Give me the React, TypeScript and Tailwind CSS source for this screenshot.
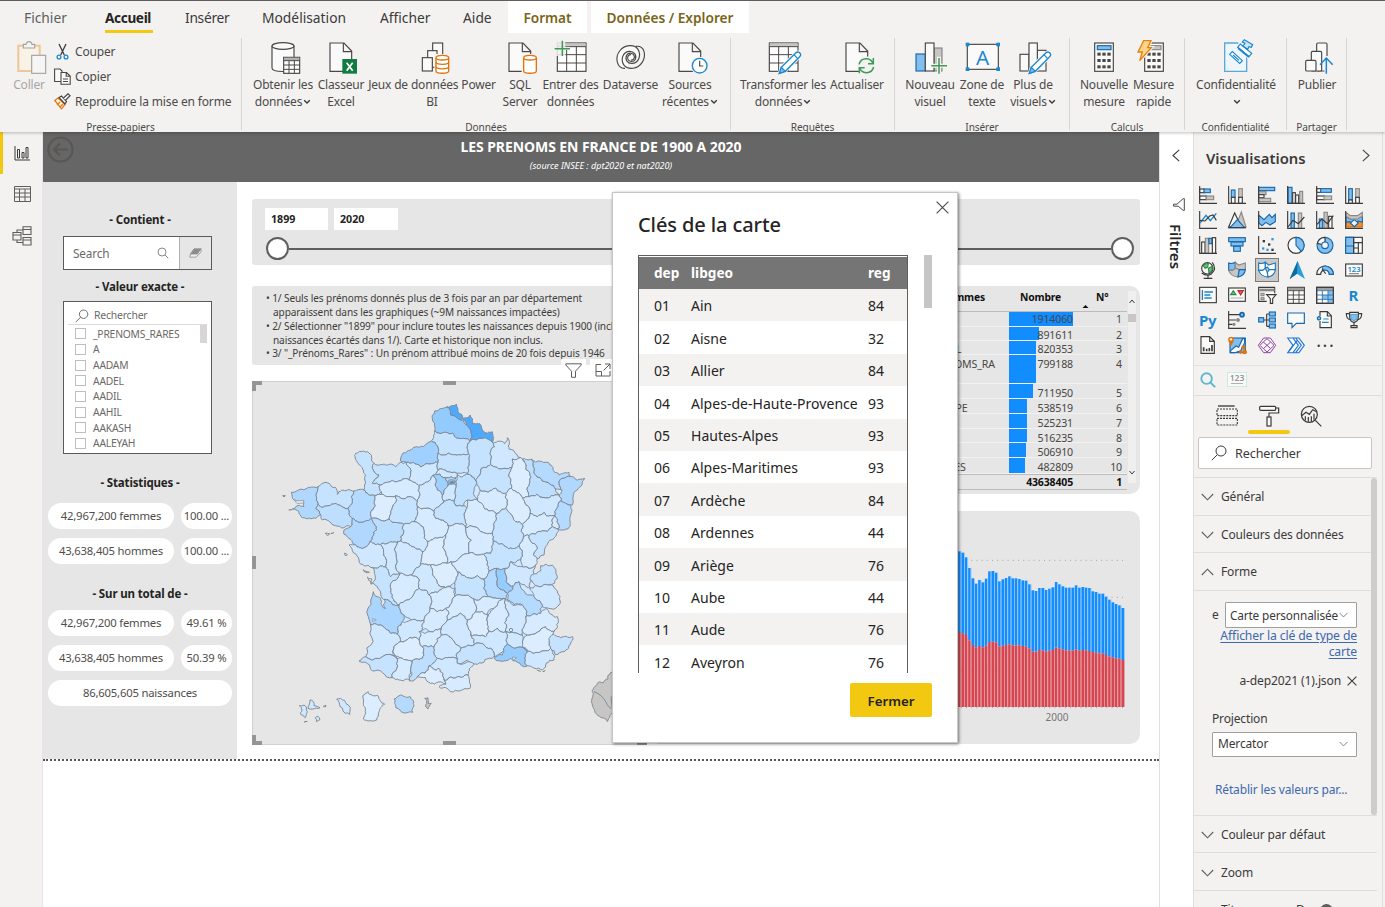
import React from "react";

type Kids = { children?: React.ReactNode };

const DARK = "#4a4846";
const BLUE = "#1b87cf";
const LIGHT = "#83beec";

/* ---------- ribbon icons (102 x 102 grid) ---------- */

const Big = ({ children, faded }: Kids & { faded?: boolean }) => (
  <svg viewBox="0 0 102 102" className={faded ? "h-[34px] w-[34px] shrink-0 overflow-visible opacity-45" : "h-[34px] w-[34px] shrink-0 overflow-visible"} fill="none" stroke={DARK} strokeWidth={3.5}>
    {children}
  </svg>
);

const Doc = () => <path d="M18 9H60L83 33V94H18ZM58 9V35H83" fill="#fafafa" />;

const Cyl = ({ x, y, w, h, color, rings = 0 }: { x: number; y: number; w: number; h: number; color: string; rings?: number }) => (
  <g stroke={color} strokeWidth={4}>
    <path d={`M${x} ${y + 7}V${y + h - 7}C${x} ${y + h + 2} ${x + w} ${y + h + 2} ${x + w} ${y + h - 7}V${y + 7}`} fill="#fff" />
    <ellipse cx={x + w / 2} cy={y + 7} rx={w / 2} ry={7} fill="#fff" />
    {Array.from({ length: rings }, (_, i) => {
      const yy = y + 7 + ((h - 14) * (i + 1)) / (rings + 1);
      return <path key={i} d={`M${x} ${yy}C${x} ${yy + 9} ${x + w} ${yy + 9} ${x + w} ${yy}`} />;
    })}
  </g>
);

const Grid = () => (
  <g>
    <rect x="10" y="9" width="86" height="85" fill="#fff" />
    <rect x="11" y="10" width="84" height="10" fill="#c8c6c4" stroke="none" />
    <path d="M10 20H96M10 44H96M10 69H96M38 20V94M67 20V94" strokeWidth="3" />
  </g>
);

const Pencil = () => (
  <g stroke={BLUE}>
    <path d="M40 100L46 82L90 38Q98 33 103 41Q106 47 100 51L58 94Z" fill="#fff" stroke="#f3f2f1" strokeWidth="9" />
    <path d="M40 100L46 82L90 38Q98 33 103 41Q106 47 100 51L58 94Z" fill="#fff" strokeWidth="4" />
    <path d="M40 100L46 82L58 94Z" fill={LIGHT} />
    <path d="M84 44L95 56" />
  </g>
);

const Keys = ({ x }: { x: number }) => (
  <g fill={DARK} stroke="none">
    {[38, 57, 76].map((y) => [0, 15, 30].map((dx) => <rect key={`${y}-${dx}`} x={x + dx} y={y} width="10" height="9" />))}
  </g>
);

const PasteIcon = () => (
  <Big faded>
    <rect x="19" y="17" width="64" height="76" stroke="#e8912d" fill="#fff3dd" strokeWidth="6" />
    <path d="M34 24V13H42Q44 5 51 5Q58 5 60 13H68V24Z" fill="#f3f2f1" />
    <rect x="59" y="46" width="42" height="54" fill="#fafafa" />
  </Big>
);
const GetDataIcon = () => (
  <Big>
    <path d="M18 18V84C18 98 84 98 84 84V18" fill="#fafafa" />
    <ellipse cx="51" cy="18" rx="33" ry="10" fill="#fafafa" />
    <rect x="53" y="52" width="48" height="48" fill="#fff" />
    <rect x="54" y="53" width="46" height="8" fill="#b3b0ad" stroke="none" />
    <path d="M53 62H101M53 75H101M53 88H101M69 62V100M85 62V100" strokeWidth="3" />
  </Big>
);
const ExcelIcon = () => (
  <Big>
    <Doc />
    <rect x="55" y="57" width="44" height="44" fill="#107c41" stroke="none" />
    <path d="M68 68L86 92M86 68L68 92" stroke="#fff" strokeWidth="5" />
  </Big>
);
const DatasetIcon = () => (
  <Big>
    <rect x="53" y="9" width="30" height="52" fill="#fafafa" />
    <rect x="38" y="32" width="28" height="50" fill="#fafafa" />
    <rect x="22" y="53" width="30" height="40" fill="#fafafa" />
    <rect x="58" y="42" width="48" height="62" fill="#f3f2f1" stroke="none" />
    <Cyl x={63} y={46} w={38} h={54} color="#e0740e" rings={2} />
  </Big>
);
const SqlIcon = () => (
  <Big>
    <Doc />
    <rect x="56" y="42" width="48" height="56" fill="#f3f2f1" stroke="none" />
    <Cyl x={62} y={46} w={38} h={54} color="#e0740e" />
  </Big>
);
const EnterIcon = () => (
  <Big>
    <Grid />
    <path d="M0 0H34V20H46V30H34V48H0Z" fill="#f3f2f1" stroke="none" opacity=".85" />
    <path d="M25 2V48M2 26H48" stroke="#3d9a57" strokeWidth="4.5" />
  </Big>
);
const DataverseIcon = () => (
  <Big>
    <path d="M33 85C8 86 2 52 17 33C32 13 62 12 72 28C83 47 73 68 56 70C40 72 32 58 38 46C44 36 58 38 61 49C62 56 57 61 51 60" fill="#fafafa" />
    <path d="M66 19C92 16 98 46 84 68C71 88 43 90 31 77C18 60 26 36 45 34C60 33 69 46 64 58C58 68 44 66 41 56C40 49 45 43 51 44" />
  </Big>
);
const RecentIcon = () => (
  <Big>
    <Doc />
    <circle cx="80" cy="77" r="27" fill="#f3f2f1" stroke="none" />
    <circle cx="80" cy="77" r="22" fill="#fff" stroke={BLUE} strokeWidth="4" />
    <path d="M80 62V78H91" />
  </Big>
);
const TransformIcon = () => (
  <Big>
    <Grid />
    <Pencil />
  </Big>
);
const RefreshIcon = () => (
  <Big>
    <Doc />
    <circle cx="79" cy="77" r="28" fill="#f3f2f1" stroke="none" />
    <g stroke="#3d9a57" strokeWidth="4.5">
      <path d="M57 73Q62 55 80 56Q94 57 99 70M100 54V71H84" />
      <path d="M101 81Q96 99 78 98Q64 97 59 84M58 100V83H74" />
    </g>
  </Big>
);
const VisualIcon = () => (
  <Big>
    <rect x="9" y="42" width="28" height="51" fill={LIGHT} stroke="#1668ad" />
    <rect x="63" y="24" width="24" height="69" fill="#c8c6c4" stroke="#8a8886" />
    <rect x="37" y="9" width="26" height="84" fill="#fafafa" />
    <path d="M78 50V104M52 77H104" stroke="#f3f2f1" strokeWidth="12" />
    <path d="M78 54V101M55 77H102" stroke="#3d9a57" strokeWidth="4.5" />
  </Big>
);
const TextBoxIcon = () => (
  <Big>
    <rect x="7" y="13" width="93" height="75" fill="#fafafa" />
    <g fill={BLUE} stroke="none">
      <rect x="2" y="8" width="11" height="11" />
      <rect x="94" y="8" width="11" height="11" />
      <rect x="2" y="82" width="11" height="11" />
      <rect x="94" y="82" width="11" height="11" />
    </g>
    <text x="53" y="74" textAnchor="middle" fontSize="62" fontFamily="Noto Sans, sans-serif" fill={BLUE} stroke="none">A</text>
  </Big>
);
const MoreVisualsIcon = () => (
  <Big>
    <rect x="12" y="43" width="27" height="50" fill="#fafafa" />
    <rect x="64" y="31" width="26" height="62" fill="#fafafa" />
    <rect x="39" y="9" width="25" height="84" fill="#fafafa" />
    <Pencil />
  </Big>
);
const MeasureIcon = () => (
  <Big>
    <rect x="23" y="9" width="56" height="85" fill="#fafafa" />
    <rect x="31" y="17" width="41" height="12" fill={LIGHT} stroke="#1668ad" />
    <Keys x={31} />
  </Big>
);
const QuickIcon = () => (
  <Big>
    <rect x="23" y="9" width="56" height="85" fill="#fafafa" />
    <rect x="31" y="17" width="41" height="12" fill="#c8c6c4" stroke="#8a8886" />
    <Keys x={31} />
    <path d="M20 2H42L32 23H43L8 62L16 36H3Z" fill="#fcd48a" stroke="#f3f2f1" strokeWidth="10" />
    <path d="M20 2H42L32 23H43L8 62L16 36H3Z" fill="#fcd48a" stroke="#e8810e" strokeWidth="4" />
  </Big>
);
const PrivacyIcon = () => (
  <Big>
    <path d="M58 9H17V94H83V50" fill="#eef6fc" stroke="#5aa7dc" strokeWidth="4" />
    <g stroke={BLUE} strokeWidth="3.6">
      <path d="M32 43L40 35L70 62L62 70Z" fill="#fff" />
      <path d="M42 45L60 61" />
      <path d="M62 24L94 50" stroke="#f3f2f1" strokeWidth="18" />
      <path d="M56 22L64 12L98 40L90 50Z" fill="#fff" />
      <path d="M58 25L90 51" strokeWidth="6" />
      <path d="M72 18L78 10L70 6L76 -1L101 14L97 22L90 20L86 28Z" fill="#cfe6f8" />
    </g>
  </Big>
);
const PublishIcon = () => (
  <Big>
    <rect x="50" y="9" width="31" height="84" rx="4" fill="#fafafa" />
    <rect x="34" y="34" width="31" height="59" rx="4" fill="#fafafa" />
    <rect x="17" y="61" width="31" height="32" rx="4" fill="#fafafa" />
    <path d="M79 48V102" stroke="#f3f2f1" strokeWidth="11" />
    <path d="M79 54V101M60 74L79 54L98 74" stroke={BLUE} strokeWidth="4.5" />
  </Big>
);

/* ---------- ribbon ---------- */

const Caret = () => (
  <svg viewBox="0 0 8 6" className="ml-[1px] inline-block h-[6px] w-[8px]" fill="none" stroke="#3b3a39" strokeWidth="1.4">
    <path d="M1.2 1.2L4 4L6.8 1.2" />
  </svg>
);

const Btn = ({ w, icon, a, b, caret, dim }: { w: string; icon: React.ReactNode; a: string; b?: string; caret?: boolean; dim?: boolean }) => (
  <div className={`${w} flex shrink-0 flex-col items-center`}>
    {icon}
    <div className={`mt-[3px] flex flex-col items-center whitespace-nowrap text-[12px] leading-[16.5px] tracking-[-0.18px] ${dim ? "text-[#a8a6a4]" : "text-[#4c4a48]"}`}>
      <span>{a}</span>
      <span>
        {b}
        {caret && <Caret />}
      </span>
    </div>
  </div>
);

const Group = ({ w, pl, label, children }: Kids & { w: string; pl: string; label: string }) => (
  <div className={`${w} flex h-[92px] shrink-0 flex-col border-r border-[#d8d6d4]`}>
    <div className={`${pl} flex h-[82px] shrink-0 pt-[2px]`}>{children}</div>
    <div className="text-center text-[10.1px] leading-[14px] tracking-[-0.1px] text-[#4c4a48]">{label}</div>
  </div>
);

const Small = ({ icon, children }: Kids & { icon: React.ReactNode }) => (
  <div className="flex h-[25px] items-center">
    <span className="flex w-[21px] items-center">{icon}</span>
    <span className="whitespace-nowrap text-[12px] tracking-[-0.16px] text-[#4c4a48]">{children}</span>
  </div>
);

const Ribbon = () => (
  <header className="relative z-10 h-[132px] shrink-0 border-t border-[#605e5c] bg-[#f3f2f1] shadow-[0_1px_3px_rgba(0,0,0,0.25)]">
    <nav className="flex h-[32px] items-stretch whitespace-nowrap text-[13.8px] leading-[33px] text-[#3b3a39]">
      <span className="ml-[24px] w-[81px] text-[#605e5c]">Fichier</span>
      <span className="relative mr-[32px] w-[48px] text-[13.6px] font-bold leading-[34px] tracking-[-0.35px] text-[#252423]">
        Accueil
        <i className="absolute bottom-0 left-0 h-[3px] w-[48px] bg-[#f2c811]" />
      </span>
      <span className="w-[77px] tracking-[-0.3px]">Insérer</span>
      <span className="w-[118px]">Modélisation</span>
      <span className="w-[83px]">Afficher</span>
      <span className="w-[45px]">Aide</span>
      <span className="mr-[4px] w-[79px] bg-white text-center text-[13.6px] font-semibold leading-[34px] text-[#7a6518]">Format</span>
      <span className="w-[158px] bg-white text-center text-[13.7px] font-semibold leading-[34px] text-[#7a6518]">Données / Explorer</span>
    </nav>
    <div className="flex pt-[5px]">
      <Group w="w-[242px]" pl="pl-[7px]" label="Presse-papiers">
        <Btn w="w-[44px]" icon={<PasteIcon />} a="Coller" dim />
        <div className="-mt-[1px] ml-[3px] flex flex-col">
          <Small
            icon={
              <svg viewBox="0 0 17 17" className="h-[17px] w-[17px]" fill="none" stroke="#3b3a39" strokeWidth="1.3">
                <path d="M5 1L10.3 12M12 1L6.7 12" />
                <circle cx="5" cy="14" r="1.9" stroke={BLUE} />
                <circle cx="12" cy="14" r="1.9" stroke={BLUE} />
              </svg>
            }
          >
            Couper
          </Small>
          <Small
            icon={
              <svg viewBox="0 0 17 17" className="h-[17px] w-[17px]" fill="#fafafa" stroke="#4a4846" strokeWidth="1.1">
                <path d="M.6 1H6L8 3V13.5H.6Z" />
                <path d="M7 4.5H12.5L16.2 8V16.3H7ZM12.2 4.5V8.3H16.2M9 11H14M9 13.5H14" />
              </svg>
            }
          >
            Copier
          </Small>
          <Small
            icon={
              <svg viewBox="0 0 17 17" className="h-[17px] w-[17px]" fill="#fafafa" stroke="#4a4846" strokeWidth="1.2">
                <path d="M.8 7.5L4 5L11 11.5L7.5 15.8Z" fill="#fff3dd" stroke="#e0740e" />
                <path d="M3 12L6 9M6 14L9 11" stroke="#e0740e" />
                <path d="M5 4.5L7.5 3L12.5 8.5L11 11Z" />
                <path d="M9.5 5L14 .8L16 2.8L11.5 7.2" />
              </svg>
            }
          >
            Reproduire la mise en forme
          </Small>
        </div>
      </Group>
      <Group w="w-[489px]" pl="pl-[9px]" label="Données">
        <Btn w="w-[64px]" icon={<GetDataIcon />} a="Obtenir les" b="données" caret />
        <Btn w="w-[52px]" icon={<ExcelIcon />} a="Classeur" b="Excel" />
        <Btn w="w-[130px]" icon={<DatasetIcon />} a="Jeux de données Power" b="BI" />
        <Btn w="w-[46px]" icon={<SqlIcon />} a="SQL" b="Server" />
        <Btn w="w-[55px]" icon={<EnterIcon />} a="Entrer des" b="données" />
        <Btn w="w-[65px]" icon={<DataverseIcon />} a="Dataverse" />
        <Btn w="w-[54px]" icon={<RecentIcon />} a="Sources" b="récentes" caret />
      </Group>
      <Group w="w-[164px]" pl="pl-[10px]" label="Requêtes">
        <Btn w="w-[84px]" icon={<TransformIcon />} a="Transformer les" b="données" caret />
        <Btn w="w-[64px]" icon={<RefreshIcon />} a="Actualiser" />
      </Group>
      <Group w="w-[175px]" pl="pl-[8px]" label="Insérer">
        <Btn w="w-[54px]" icon={<VisualIcon />} a="Nouveau" b="visuel" />
        <Btn w="w-[50px]" icon={<TextBoxIcon />} a="Zone de" b="texte" />
        <Btn w="w-[52px]" icon={<MoreVisualsIcon />} a="Plus de" b="visuels" caret />
      </Group>
      <Group w="w-[115px]" pl="pl-[8px]" label="Calculs">
        <Btn w="w-[52px]" icon={<MeasureIcon />} a="Nouvelle" b="mesure" />
        <Btn w="w-[47px]" icon={<QuickIcon />} a="Mesure" b="rapide" />
      </Group>
      <Group w="w-[102px]" pl="pl-[9px]" label="Confidentialité">
        <Btn w="w-[84px]" icon={<PrivacyIcon />} a="Confidentialité" caret />
      </Group>
      <Group w="w-[60px]" pl="pl-[4px]" label="Partager">
        <Btn w="w-[52px]" icon={<PublishIcon />} a="Publier" />
      </Group>
    </div>
  </header>
);

/* ---------- map ---------- */

const A = "#a9d5ff", B = "#b5daff", C = "#c5e3ff", D = "#cfe7ff", E = "#d6ebff", F = "#dbedff", H = "#97ccff", X = "#4faaff";

const REGIONS: [string, string][] = [
  ["#94cbff", "572,108 608,96 620,120 650,135 668,150 678,198 640,190 605,172 572,168"],
  [X, "608,96 638,88 642,110 655,130 650,135 620,120"],
  [X, "655,130 678,120 686,145 712,152 716,168 745,170 748,205 678,198 668,150"],
  [C, "572,168 605,172 640,190 678,198 674,236 640,240 612,234 582,235 580,212 562,198"],
  ["#9fd0ff", "562,198 580,212 582,235 582,262 550,266 530,276 508,262 487,262 470,258 475,236 510,216 545,208"],
  [C, "582,235 612,234 640,240 674,236 676,262 672,298 640,295 608,290 582,286 582,262"],
  [C, "678,198 748,205 752,215 740,262 740,268 712,280 708,300 696,318 680,300 672,298 676,262 674,236"],
  [D, "748,205 782,206 790,188 796,205 795,222 815,236 830,248 805,252 804,278 780,280 740,268 740,262 752,215"],
  [C, "740,268 780,280 804,278 800,320 802,340 785,355 755,340 732,352 708,345 698,325 696,318 708,300 712,280"],
  [F, "805,252 830,248 842,262 855,290 858,320 856,365 835,368 830,360 802,340 800,320 804,278"],
  ["#bddeff", "842,262 835,252 862,252 870,290 895,318 935,342 945,360 900,368 856,365 858,320 855,290"],
  [B, "862,252 875,262 885,258 912,262 930,290 945,300 975,292 980,305 955,310 945,325 955,348 935,342 895,318 870,290"],
  ["#b0d8ff", "980,305 1022,310 1000,345 985,390 965,385 950,378 945,360 955,348 945,325 955,310"],
  [B, "950,378 965,385 980,390 978,430 972,462 950,465 942,462 940,432 932,422 938,400"],
  [D, "835,368 856,365 900,368 945,360 950,378 938,400 932,422 900,412 880,425 858,415 850,392"],
  [F, "802,340 830,360 835,368 850,392 858,415 855,430 835,448 815,440 795,412 785,400 790,375 785,355"],
  [E, "708,345 732,352 755,340 785,355 790,375 785,400 760,415 735,408 715,388 700,372"],
  [E, "835,448 855,430 858,415 880,425 900,412 932,422 925,432 925,455 890,470 855,482 838,485 832,470"],
  [E, "925,432 932,422 940,432 942,462 925,455"],
  [C, "855,482 890,470 925,455 942,462 930,490 905,515 900,540 880,552 868,540 880,520 865,505"],
  [E, "838,485 855,482 865,505 880,520 868,540 880,552 875,570 860,580 835,578 830,555 835,530 825,512 835,495"],
  [C, "785,400 795,412 815,440 835,448 832,470 838,485 835,495 825,512 785,515 748,498 745,475 752,440 755,425 760,415"],
  [E, "670,375 700,372 715,388 735,408 760,415 755,425 752,440 745,475 710,470 665,458 660,420 668,400"],
  ["#bfe0ff", "640,300 672,298 680,300 696,318 698,325 690,360 700,372 670,375 660,392 635,392 630,378 632,355 636,330"],
  [D, "582,286 608,290 640,295 640,300 636,308 605,308 567,300"],
  ["#9fd0ff", "567,300 605,308 612,330 600,345 595,362 580,345"],
  [D, "612,330 636,330 632,355 630,378 600,378 595,362 600,345"],
  [B, "605,308 636,308 636,330 612,330"],
  [D, "487,262 508,262 530,276 550,266 582,262 582,286 567,300 555,318 525,332 510,322 494,315"],
  [C, "390,265 430,270 455,275 487,262 494,315 460,320 430,322 408,330 385,325 405,300 385,280"],
  [C, "335,235 380,238 382,255 390,265 385,280 405,300 385,325 408,330 412,350 392,362 360,345 358,285 340,262"],
  [E, "408,330 430,322 460,320 494,315 510,322 525,332 528,360 520,378 495,365 470,370 455,362 412,358 412,350"],
  [D, "525,332 555,318 567,300 580,345 595,362 600,378 585,395 570,408 545,400 520,395 520,378 528,360"],
  [F, "392,362 412,358 455,362 452,385 440,410 435,432 382,430 392,395"],
  [B, "330,348 360,345 392,362 392,395 382,430 340,440 325,430 312,400 325,380"],
  [C, "222,335 255,325 280,358 310,345 330,348 325,380 312,400 290,392 255,392 222,388"],
  ["#b0d8ff", "142,352 185,342 222,335 222,388 215,400 230,420 215,430 175,428 145,402 180,395 178,380 150,375"],
  ["#bddeff", "222,388 255,392 290,392 312,400 325,430 320,455 275,452 235,435 230,420 215,400"],
  ["#b0d8ff", "325,430 340,440 382,430 398,465 378,500 360,518 335,510 315,490 300,478 300,465 320,455"],
  ["#bbdeff", "382,430 435,432 480,448 470,498 462,500 440,500 410,508 378,500 398,465"],
  [C, "455,362 470,370 495,365 520,378 520,395 518,425 510,440 480,448 435,432 440,410 452,385"],
  [E, "520,395 545,400 570,408 575,430 612,452 605,480 570,490 550,500 540,488 530,450 510,440 518,425"],
  [C, "570,408 585,395 600,378 630,378 635,392 660,392 668,400 660,420 665,458 612,452 575,430"],
  [D, "480,448 510,440 530,450 540,488 550,500 535,530 500,512 470,498"],
  [D, "315,510 335,510 360,518 378,500 410,508 425,575 385,578 345,555"],
  [D, "410,508 440,500 462,500 468,595 440,605 425,575"],
  [D, "462,500 470,498 500,512 535,530 530,568 500,600 468,595"],
  [F, "550,500 570,490 605,480 600,500 608,565 560,570 530,568 535,530"],
  [E, "612,452 665,458 675,535 640,555 620,560 608,565 600,500 605,480"],
  [E, "665,458 710,470 745,475 748,498 740,535 718,538 700,540 675,535"],
  [C, "748,498 785,515 825,512 835,530 830,555 800,560 785,580 760,580 735,588 730,560 718,538 740,535"],
  [E, "675,535 700,540 718,538 730,560 735,588 720,612 700,602 640,590 620,560 640,555"],
  [F, "560,570 608,565 620,560 640,590 632,625 605,638 580,625 565,600"],
  [D, "530,568 560,570 565,600 580,625 605,638 555,660 525,640 525,612 500,600"],
  [E, "440,625 468,595 500,600 525,612 525,640 500,670 478,682 465,690 445,660"],
  [C, "385,578 425,575 440,605 468,595 440,625 445,660 465,690 440,680 410,660 385,625"],
  [A, "388,650 410,670 425,700 422,672 440,680 465,690 480,720 475,740 460,778 425,762 380,750"],
  [D, "478,682 500,670 525,640 555,660 558,700 540,738 500,735 480,720 465,690"],
  [E, "555,660 605,638 632,640 632,665 605,700 580,710 558,700"],
  [C, "640,590 700,602 720,612 720,640 735,665 685,670 632,665 632,625"],
  [B, "720,612 735,588 760,580 765,640 790,655 785,672 735,665 720,640"],
  [H, "760,580 785,580 790,625 808,632 790,655 765,640"],
  [D, "785,580 800,560 830,575 860,580 875,570 858,640 825,620 808,632 790,625"],
  [C, "862,600 890,588 890,572 925,570 940,610 915,630 875,632 858,615"],
  [D, "858,640 875,632 915,630 948,665 945,690 895,695 870,665"],
  [B, "790,655 808,632 825,620 858,660 870,665 895,695 890,715 845,725 835,690 790,675"],
  [D, "785,672 835,690 845,725 835,770 835,780 785,770 795,720"],
  [E, "785,672 795,720 785,770 735,768 730,740 750,700"],
  [E, "685,670 735,665 785,672 750,700 730,718 695,710"],
  [E, "632,665 685,670 695,710 670,735 650,715 610,735 605,700"],
  [E, "558,700 580,710 605,700 610,735 592,760 560,770 535,765 540,738"],
  [D, "610,735 650,715 670,735 680,780 690,810 650,820 615,785 592,780 592,760"],
  [F, "670,735 695,710 730,718 730,740 735,768 725,785 680,780"],
  [D, "680,780 725,785 735,768 785,770 790,808 750,845 740,820 690,810"],
  [C, "640,852 650,820 690,810 740,820 750,845 700,868 640,865"],
  [D, "592,780 615,785 650,820 640,852 600,850 580,850 570,815 580,790"],
  [E, "525,770 560,770 592,760 592,780 580,790 570,815 535,815 525,795"],
  [D, "475,740 500,735 540,738 535,765 525,770 525,795 470,800 460,778"],
  [D, "380,750 425,762 460,778 470,800 450,815 448,842 365,845"],
  [F, "470,800 525,795 535,815 540,840 505,858 475,850 450,835 450,815"],
  [C, "345,858 365,845 448,842 460,850 445,908 385,888"],
  [E, "448,842 475,850 505,858 500,885 500,915 465,915 445,908 460,850"],
  ["#bddeff", "505,858 540,840 535,815 570,815 580,850 555,872 520,905 508,918 496,918 500,885"],
  [F, "520,905 555,872 585,880 600,915 605,928 560,925"],
  [D, "580,850 600,850 640,852 640,865 690,868 672,900 640,905 600,915 585,880 555,872"],
  [E, "585,935 605,928 600,915 640,905 672,900 678,940 620,950"],
  [H, "750,850 775,840 790,808 850,828 850,872 820,862 800,850 785,858"],
  [D, "785,770 835,780 850,828 790,808"],
  [D, "850,828 920,820 930,855 895,885 850,872"],
  [C, "920,770 950,788 985,785 980,805 960,830 935,840 920,820 915,800"],
  [F, "850,780 905,755 930,770 915,800 920,820 850,828 835,800"],
  [E, "835,770 845,725 890,715 905,700 940,725 930,770 905,755 850,780"],
  [D, "166,992 180,990 190,1010 184,1028 172,1020"],
  [D, "192,1000 198,975 208,980 210,992 228,998 205,1002"],
  [D, "214,1028 222,1024 228,1034 218,1040"],
  [D, "278,972 290,970 308,988 318,1018 300,1012 288,995"],
  [F, "358,960 372,950 402,962 422,988 405,1010 398,1035 358,1032 364,1010 358,985"],
  [B, "450,972 470,960 500,966 510,992 506,1012 480,1014 455,998"],
  ["#c8c6c4", "542,970 552,968 552,985 562,985 552,1002 545,995 548,985"],
  ["#c8c6c4", "1045,950 1060,925 1092,912 1100,892 1112,900 1112,1010 1090,1040 1062,1022 1045,990"],
  [D, "238,994 246,991 244,996"],
  [D, "358,584 376,592 366,592"],
  [D, "370,606 384,612 382,628 374,616"],
  [D, "244,474 256,476 250,482"],
  [D, "302,534 310,540 304,542"],
  [D, "116,362 124,362 120,366"],
];

type P = [number, number];

const noise = (x: number, y: number, k: number) => {
  const v = Math.sin(x * 12.9898 + y * 78.233 + k * 37.719) * 43758.5453;
  return v - Math.floor(v) - 0.5;
};

/* Splits an edge into wobbling pieces; endpoints are ordered so that neighbours share one border. */
const rough = (a: P, b: P, depth: number): P[] => {
  const flip = a[0] > b[0] || (a[0] === b[0] && a[1] > b[1]);
  const p = flip ? b : a;
  const q = flip ? a : b;
  const walk = (s: P, e: P, d: number): P[] => {
    const len = Math.hypot(e[0] - s[0], e[1] - s[1]);
    if (d === 0 || len < 7) return [s];
    const n = noise(s[0] + e[0], s[1] + e[1], d) * 0.4;
    const m: P = [(s[0] + e[0]) / 2 - (e[1] - s[1]) * n, (s[1] + e[1]) / 2 + (e[0] - s[0]) * n];
    return [...walk(s, m, d - 1), ...walk(m, e, d - 1)];
  };
  const pts = [...walk(p, q, depth), q];
  if (flip) pts.reverse();
  return pts.slice(0, -1);
};

const outline = (src: string) => {
  const pts = src.split(" ").map((s) => s.split(",").map(Number) as P);
  const out = pts.flatMap((p, i) => rough(p, pts[(i + 1) % pts.length], 3));
  return "M" + out.map((p) => `${p[0].toFixed(1)} ${p[1].toFixed(1)}`).join("L") + "Z";
};

const FranceMap = () => (
  <svg viewBox="24 18 1185 1092" className="-ml-px -mt-px block h-[364px] w-[395px]">
    <path d="M400 280L560 240L760 260L900 350L920 440L830 560L900 700L900 800L780 790L660 830L600 880L480 860L420 800L440 660L400 540L350 420Z" fill={D} />
    <g stroke="#7c8791" strokeWidth="2.8" strokeLinejoin="round">
      {REGIONS.map(([fill, src], i) => (
        <path key={i} d={outline(src)} fill={fill} />
      ))}
      <path d="M1050 950Q1075 960 1085 980T1102 1000" fill="none" />
      <ellipse cx="622" cy="321" rx="10" ry="7" fill="#b5daff" />
      <ellipse cx="623" cy="322" rx="6" ry="3.5" fill="#2f96f5" />
      <circle cx="801" cy="765" r="5" fill={D} />
    </g>
    <path d="M386 730L397 735L386 739ZM805 846L818 848L808 856ZM152 378L180 376L178 384L160 386Z" fill="#e6e6e6" stroke="#85919c" strokeWidth="2" />
    <path d="M880 886L890 889M896 890L904 887M180 1041L190 1039M260 476L270 473M134 405L144 404" stroke="#777" strokeWidth="3" />
  </svg>
);

const Corner = ({ cls }: { cls: string }) => <i className={`absolute h-[10px] w-[10px] border-[#979593] ${cls}`} />;

/* ---------- report ---------- */

const Pill = ({ w, children }: Kids & { w: string }) => (
  <div className={`${w} flex h-[26px] items-center justify-center whitespace-nowrap rounded-[13px] bg-white pt-[1px] text-[11.3px] tracking-[-0.2px] text-[#4f4d4b]`}>{children}</div>
);

const Heading = ({ children, cls }: Kids & { cls: string }) => (
  <div className={`text-center text-[11.5px] font-bold leading-[16px] tracking-[-0.15px] text-[#252423] ${cls}`}>{children}</div>
);

const NAMES = ["_PRENOMS_RARES", "A", "AADAM", "AADEL", "AADIL", "AAHIL", "AAKASH", "AALEYAH"];

const SidePanel = () => (
  <aside className="h-[577px] w-[194px] shrink-0 bg-[#e6e6e6]">
    <Heading cls="pt-[30px]">- Contient -</Heading>
    <div className="ml-[20px] mt-[8px] flex h-[34px] w-[149px] border border-[#5b5a58] bg-white">
      <span className="flex w-[116px] items-center justify-between border-r border-[#b3b0ad] pl-[9px] pr-[10px] pt-[2px] text-[11.8px] tracking-[-0.15px] text-[#6b6967]">
        Search
        <svg viewBox="0 0 12 12" className="mb-[2px] h-[12px] w-[12px]" fill="none" stroke="#8a8886" strokeWidth="1">
          <circle cx="5" cy="5" r="4" />
          <path d="M8 8L11.3 11.3" />
        </svg>
      </span>
      <span className="flex flex-1 items-center justify-center bg-[#e6e6e6]">
        <svg viewBox="0 0 13 10" className="h-[10px] w-[13px]" stroke="#8f8d8b" strokeWidth=".8">
          <path d="M5 .8H12L8.5 6H1.5Z" fill="#8f8d8b" />
          <path d="M1.5 6L.8 9.2H7L12 4V.8L8.5 6Z" fill="#eee" />
        </svg>
      </span>
    </div>
    <Heading cls="pt-[9px]">- Valeur exacte -</Heading>
    <div className="ml-[20px] mt-[6px] h-[153px] w-[149px] overflow-hidden border border-[#5b5a58] bg-white text-[#6b6967]">
      <div className="mx-[4px] flex h-[23px] items-center border-b border-[#dedcda] pl-[7px] pt-[5px] text-[10.4px] tracking-[-0.18px]">
        <svg viewBox="0 0 14 14" className="mr-[5px] h-[14px] w-[14px]" fill="none" stroke="#605e5c" strokeWidth=".9">
          <circle cx="8.6" cy="5.2" r="4.2" />
          <path d="M5.7 8.2L.8 13" />
        </svg>
        Rechercher
      </div>
      <div className="flex">
        <div className="w-[132px] pt-[1px]">
          {NAMES.map((n) => (
            <div key={n} className="flex h-[15.7px] items-center pl-[11px] text-[10.3px] tracking-[-0.2px]">
              <i className="mr-[7px] h-[11px] w-[11px] border border-[#c0bebc]" />
              <span className="pt-[1px]">{n}</span>
            </div>
          ))}
        </div>
        <i className="ml-[4px] h-[18px] w-[7px] bg-[#d8d6d4]" />
      </div>
    </div>
    <Heading cls="pt-[21px]">- Statistiques -</Heading>
    <div className="mt-[12px] flex flex-col gap-[9px] pl-[5px]">
      <div className="flex gap-[7px]"><Pill w="w-[126px]">42,967,200 femmes</Pill><Pill w="w-[51px]">100.00 ...</Pill></div>
      <div className="flex gap-[7px]"><Pill w="w-[126px]">43,638,405 hommes</Pill><Pill w="w-[51px]">100.00 ...</Pill></div>
    </div>
    <Heading cls="pt-[22px]">- Sur un total de -</Heading>
    <div className="mt-[8px] flex flex-col gap-[9px] pl-[5px]">
      <div className="flex gap-[7px]"><Pill w="w-[126px]">42,967,200 femmes</Pill><Pill w="w-[51px]">49.61 %</Pill></div>
      <div className="flex gap-[7px]"><Pill w="w-[126px]">43,638,405 hommes</Pill><Pill w="w-[51px]">50.39 %</Pill></div>
      <Pill w="w-[184px]">86,605,605 naissances</Pill>
    </div>
  </aside>
);

const ROWS: [string, string, number, number][] = [
  ["JEAN", "1914060", 64, 14.5],
  ["PIERRE", "891611", 29.5, 14.7],
  ["MICHEL", "820353", 27, 14.3],
  ["_PRENOMS_RA", "799188", 26.5, 29],
  ["ANDRE", "711950", 24, 15],
  ["PHILIPPE", "538519", 18, 15],
  ["LOUIS", "525231", 17.5, 14.5],
  ["RENE", "516235", 17.5, 14.5],
  ["ALAIN", "506910", 17, 14.5],
  ["JACQUES", "482809", 16, 16],
];

const NameTable = () => (
  <div className="relative h-[208px] overflow-hidden rounded-r-[10px] bg-[#e6e6e6] text-[10.6px] tracking-[-0.15px] text-[#494745]">
    <div className="ml-[263px] w-[207px]">
      <div className="flex h-[26px] items-center border-b border-[#bdbbb9] pb-[2px] text-[10.3px] font-bold text-[#111]">
        <span className="w-[65px] text-right">Hommes</span>
        <span className="w-[76px] text-right">Nombre</span>
        <svg viewBox="0 0 8 4" className="ml-[21px] mt-[18px] h-[3px] w-[7px]"><path d="M0 4L4 0L8 4Z" fill="#111" /></svg>
        <span className="ml-[7px]">N°</span>
      </div>
      {ROWS.map(([n, v, w, h], i) => (
        <div key={n} className={`flex border-b border-[#f2f1f0] ${i === 0 ? "leading-[15.5px]" : i < 3 ? "leading-[16px]" : "leading-[18px]"}`} style={{ height: h }}>
          <span className="w-[89px] pl-[3px]">{n}</span>
          <span className="relative w-[65px] text-right">
            <i className="absolute left-0 top-0 h-full bg-[#118dff]" style={{ width: w }} />
            <span className="relative pr-[1px]">{v}</span>
          </span>
          <span className="flex-1 pr-[5px] text-right">{i + 1}</span>
        </div>
      ))}
      <div className="flex h-[16px] border-b border-t border-[#bdbbb9] text-[10.5px] font-bold leading-[14px] text-[#111]">
        <span className="w-[153px] text-right">43638405</span>
        <span className="flex-1 pr-[5px] text-right">1</span>
      </div>
    </div>
    <div className="absolute right-[4px] top-[5px] flex h-[192px] w-[8px] flex-col items-center justify-between bg-[#efefef] py-[8px]">
      <svg viewBox="0 0 6 5" className="h-[5px] w-[6px]" fill="none" stroke="#3b3a39"><path d="M.5 4L3 1L5.5 4" /></svg>
      <i className="absolute top-[23px] h-[8px] w-[8px] bg-[#c8c6c4]" />
      <svg viewBox="0 0 6 5" className="h-[5px] w-[6px]" fill="none" stroke="#3b3a39"><path d="M.5 1L3 4L5.5 1" /></svg>
    </div>
  </div>
);

const TOPS = [184, 188, 202, 234, 265, 281, 270, 277, 266, 244, 243, 248, 274, 268, 264, 259, 265, 265, 267, 271, 272, 283, 301, 303, 294, 294, 300, 296, 292, 276, 283, 289, 293, 293, 293, 286, 293, 291, 293, 294, 304, 306, 311, 311, 320, 329, 337, 342, 346, 354];
const REDS = [426, 430, 435, 451, 465, 472, 468, 472, 466, 456, 455, 457, 470, 467, 465, 463, 466, 466, 466, 468, 470, 475, 485, 485, 480, 481, 484, 482, 480, 473, 475, 478, 481, 482, 482, 478, 482, 480, 481, 483, 486, 488, 490, 490, 495, 499, 502, 505, 506, 510];

const Chart = () => (
  <div className="flex h-[233px] justify-end rounded-r-[10px] bg-[#e6e6e6]">
    <svg viewBox="0 63 600 699" className="h-[233px] w-[200px]">
      {[211, 322, 432, 541, 653].map((y) => (
        <path key={y} d={`M0 ${y}H555`} stroke="#a6a4a2" strokeWidth="3" strokeDasharray="3 12.6" />
      ))}
      {TOPS.map((t, i) => (
        <g key={i}>
          <rect x={54.5 + i * 10} y={t} width="7.6" height={REDS[i] - t} fill="#118dff" />
          <rect x={54.5 + i * 10} y={REDS[i]} width="7.6" height={651 - REDS[i]} fill="#d64550" />
          <rect x={62.1 + i * 10} y={t} width="2.4" height={REDS[i] - t} fill="#8fc7fa" />
          <rect x={62.1 + i * 10} y={REDS[i]} width="2.4" height={651 - REDS[i]} fill="#e3929a" />
        </g>
      ))}
      <text x="351" y="692" textAnchor="middle" fontSize="30" fontFamily="Noto Sans, sans-serif" fill="#777573">2000</text>
    </svg>
  </div>
);

const Report = () => (
  <main className="relative w-[1116px] shrink-0 bg-white">
    <div className="relative h-[50px] bg-[#666] text-center text-white">
      <svg viewBox="0 0 27 27" className="absolute left-[4px] top-[4px] h-[27px] w-[27px]" fill="none" stroke="#5a5654" strokeWidth="2.2">
        <circle cx="13.5" cy="13.5" r="12" />
        <path d="M21 13.5H7M13 7.5L7 13.5L13 19.5" />
      </svg>
      <div className="pt-[6px] text-[14px] font-bold leading-[18px] tracking-[-0.08px]">LES PRENOMS EN FRANCE DE 1900 A 2020</div>
      <div className="mt-[2px] text-[9px] italic leading-[15px]">(source INSEE : dpt2020 et nat2020)</div>
    </div>
    <div className="flex h-[579px] border-b-2 border-dotted border-[#555]">
      <SidePanel />
      <div className="ml-[15px] w-[888px] pt-[17px]">
        <div className="h-[66px] rounded-[3px] bg-[#e6e6e6] pl-[13px] pr-[6px] pt-[9px]">
          <div className="flex gap-[6px] text-[10.7px] font-bold leading-[22px] text-[#252423]">
            <span className="h-[22px] w-[63px] bg-white pl-[6px]">1899</span>
            <span className="h-[22px] w-[64px] bg-white pl-[6px]">2020</span>
          </div>
          <div className="mt-[7px] flex items-center pl-[1px]">
            <i className="h-[23px] w-[23px] rounded-full border-2 border-[#605e5c] bg-white" />
            <i className="h-[2px] flex-1 bg-[#605e5c]" />
            <i className="h-[23px] w-[23px] rounded-full border-2 border-[#605e5c] bg-white" />
          </div>
        </div>
        <div className="mt-[21px] flex">
          <div className="w-[395px]">
            <ul className="h-[79px] whitespace-nowrap rounded-[3px] bg-[#e6e6e6] pl-[21px] pt-[6px] text-[10.1px] leading-[13.85px] tracking-[-0.12px] text-[#3f3d3b]">
              <li className="-indent-[7px]">• 1/ Seuls les prénoms donnés plus de 3 fois par an par département</li>
              <li>apparaissent dans les graphiques (~9M naissances impactées)</li>
              <li className="-indent-[7px]">• 2/ Sélectionner "1899" pour inclure toutes les naissances depuis 1900 (incl.</li>
              <li>naissances écartés dans 1/). Carte et historique non inclus.</li>
              <li className="-indent-[7px]">• 3/ "_Prénoms_Rares" : Un prénom attribué moins de 20 fois depuis 1946</li>
            </ul>
            <div className="relative mt-[16px] h-[364px] w-[395px] border border-[#d2d0ce] bg-[#e6e6e6]">
              <FranceMap />
              <Corner cls="left-[-1px] top-[-1px] border-l-4 border-t-4" />
              <Corner cls="bottom-[-1px] left-[-1px] border-b-4 border-l-4" />
              <Corner cls="bottom-[-1px] right-[-1px] border-b-4 border-r-4" />
              <i className="absolute -top-[1px] left-[190px] h-[4px] w-[13px] bg-[#979593]" />
              <i className="absolute -bottom-[1px] left-[190px] h-[4px] w-[13px] bg-[#979593]" />
              <i className="absolute -left-[1px] top-[174px] h-[13px] w-[4px] bg-[#979593]" />
              <div className="absolute -top-[23px] left-[308px] flex h-[22px] gap-[4px]">
                <span className="flex w-[25px] items-center justify-center bg-white/90">
                  <svg viewBox="0 0 17 15" className="h-[15px] w-[17px]" fill="none" stroke="#605e5c" strokeWidth="1">
                    <path d="M.8 .8H16.2V2L10.5 8.2V14.3H6.5V8.2L.8 2Z" />
                  </svg>
                </span>
                <span className="flex w-[25px] items-center justify-center bg-white/90">
                  <svg viewBox="0 0 16 14" className="h-[14px] w-[16px]" fill="none" stroke="#605e5c" strokeWidth="1">
                    <path d="M6 1.5H1V13H15V8M1 8.5H6.5V13M10 1H15V6M15 1L8.5 7.5" />
                  </svg>
                </span>
              </div>
            </div>
          </div>
          <div className="ml-[10px] flex-1">
            <NameTable />
            <div className="h-[17px]" />
            <Chart />
          </div>
        </div>
      </div>
    </div>
    <MapKeys />
  </main>
);

/* ---------- dialog ---------- */

const KEYS: [string, string, string][] = [
  ["01", "Ain", "84"],
  ["02", "Aisne", "32"],
  ["03", "Allier", "84"],
  ["04", "Alpes-de-Haute-Provence", "93"],
  ["05", "Hautes-Alpes", "93"],
  ["06", "Alpes-Maritimes", "93"],
  ["07", "Ardèche", "84"],
  ["08", "Ardennes", "44"],
  ["09", "Ariège", "76"],
  ["10", "Aube", "44"],
  ["11", "Aude", "76"],
  ["12", "Aveyron", "76"],
];

const MapKeys = () => (
  <section className="absolute left-[569px] top-[60px] h-[551px] w-[346px] border border-[#c8c6c4] bg-white shadow-[1px_1px_3px_rgba(0,0,0,0.5)]">
    <div className="flex justify-between pl-[25px] pr-[8px]">
      <h2 className="mt-[18px] text-[20px] font-medium leading-[28px] tracking-[-0.1px] text-[#252423]">Clés de la carte</h2>
      <svg viewBox="0 0 13 13" className="mt-[8px] h-[13px] w-[13px]" stroke="#4a4846" strokeWidth="1.1"><path d="M.6 .6L12.4 12.4M12.4 .6L.6 12.4" /></svg>
    </div>
    <div className="mt-[16px] flex pl-[25px]">
      <div className="h-[418px] w-[270px] overflow-hidden border border-b-0 border-[#605e5c] pt-[1px] text-[14px] tracking-[0.03px] text-[#252423]">
        <div className="flex h-[32px] items-center bg-[#757575] pl-[15px] pt-[1px] text-[13.6px] font-bold text-white">
          <span className="w-[37px]">dep</span><span className="w-[177px]">libgeo</span><span>reg</span>
        </div>
        {KEYS.map(([d, l, r], i) => (
          <div key={d} className={`flex h-[32.4px] items-center whitespace-nowrap pl-[15px] pt-[1.5px] ${i % 2 ? "bg-white" : "bg-[#f3f2f1]"}`}>
            <span className="w-[37px]">{d}</span><span className="w-[177px]">{l}</span><span>{r}</span>
          </div>
        ))}
      </div>
      <i className="ml-[16px] h-[53px] w-[8px] bg-[#c8c6c4]" />
    </div>
    <div className="mr-[25px] mt-[10px] flex justify-end">
      <button className="h-[34px] w-[82px] rounded-[2px] bg-[#f2c811] pt-[3px] text-[13.3px] font-semibold text-[#252423]">Fermer</button>
    </div>
  </section>
);

/* ---------- visual gallery icons (54 x 54 grid) ---------- */

const V = ({ children }: Kids) => (
  <svg viewBox="0 0 54 54" className="h-[18px] w-[18px] overflow-visible" fill="none" stroke="#3b3a39" strokeWidth="3.4">
    {children}
  </svg>
);
const Axes = () => <path d="M2 0V52H54" />;
const b = { fill: LIGHT, stroke: "#1668ad" };
const g = { fill: "#c8c6c4", stroke: "#8a8886" };
const w = { fill: "#fafafa" };

const GALLERY: React.ReactNode[] = [
  <V><rect x="2" y="9" width="14" height="11" {...w} /><rect x="15" y="9" width="19" height="11" {...b} /><rect x="2" y="30" width="20" height="11" {...w} /><rect x="22" y="30" width="22" height="11" {...g} /><Axes /></V>,
  <V><rect x="10" y="12" width="11" height="22" {...b} /><rect x="10" y="34" width="11" height="18" {...w} /><rect x="32" y="8" width="11" height="26" {...g} /><rect x="32" y="34" width="11" height="18" {...w} /><Axes /></V>,
  <V><rect x="2" y="4" width="48" height="10" {...b} /><rect x="2" y="17" width="22" height="9" {...g} /><rect x="2" y="26" width="16" height="9" {...w} /><rect x="2" y="37" width="36" height="10" {...g} /><Axes /></V>,
  <V><rect x="3" y="4" width="12" height="48" {...b} /><rect x="17" y="20" width="8" height="32" {...w} /><rect x="26" y="27" width="9" height="25" {...w} /><rect x="38" y="16" width="9" height="36" {...g} /><Axes /></V>,
  <V><rect x="2" y="8" width="14" height="11" {...w} /><rect x="14" y="8" width="32" height="11" {...b} /><rect x="2" y="30" width="24" height="11" {...w} /><rect x="24" y="30" width="23" height="11" {...g} /><Axes /></V>,
  <V><rect x="11" y="8" width="11" height="34" {...b} /><rect x="11" y="42" width="11" height="10" {...w} /><rect x="32" y="8" width="11" height="26" {...g} /><rect x="32" y="34" width="11" height="18" {...w} /><Axes /></V>,
  <V><Axes /><path d="M3 36L21 13L34 29L52 7" stroke={BLUE} strokeWidth="4" /><path d="M3 28L18 30L32 15L42 12L52 28" /></V>,
  <V><path d="M28 34L40 3L54 48H30Z" {...g} /><path d="M2 48L20 6L40 48Z" {...w} /><path d="M6 50L28 26L50 50Z" {...b} /><path d="M0 50H54" /></V>,
  <V><path d="M2 36V12L18 26L34 10L42 20L52 10V32L36 42L24 34L12 44Z" {...b} /><Axes /></V>,
  <V><rect x="12" y="6" width="10" height="46" {...b} /><rect x="34" y="6" width="10" height="46" {...g} /><Axes /><path d="M3 48L18 28L34 38L52 18" /></V>,
  <V><rect x="10" y="24" width="10" height="28" {...b} /><rect x="24" y="4" width="10" height="48" {...g} /><rect x="38" y="16" width="10" height="36" {...w} /><Axes /><path d="M3 40L18 24L34 38L52 14" /></V>,
  <V><path d="M3 32L14 26L28 32L40 26L52 30V48H3Z" fill="#f0902f" stroke="#d96b0b" /><path d="M3 16L16 24L28 22L52 14V34L40 30L28 44L14 32L3 34Z" {...b} /><path d="M16 36L28 26L40 36L28 47Z" fill="#f3f2f1" stroke="#1668ad" /><path d="M3 4L16 14H38L52 4V16L38 24H16L3 16Z" {...g} /><Axes /></V>,
  <V><rect x="8" y="18" width="10" height="34" {...w} /><rect x="19" y="7" width="10" height="45" {...g} /><rect x="30" y="7" width="9" height="16" {...b} /><rect x="40" y="5" width="10" height="47" {...w} /><Axes /></V>,
  <V><rect x="2" y="5" width="50" height="12" {...b} /><rect x="9" y="18" width="36" height="12" {...b} /><rect x="17" y="31" width="20" height="15" {...b} /></V>,
  <V><Axes /><g fill="#3b3a39" stroke="none"><rect x="14" y="12" width="7" height="7" /><rect x="30" y="22" width="7" height="7" /><rect x="40" y="38" width="7" height="7" /></g><g fill="#3a96dd" stroke="none"><rect x="40" y="6" width="7" height="7" /><rect x="12" y="34" width="7" height="7" /><rect x="25" y="38" width="7" height="7" /></g></V>,
  <V><circle cx="27" cy="28" r="24" {...w} /><path d="M27 4A24 24 0 0 1 43 46L27 28Z" {...b} /></V>,
  <V><circle cx="27" cy="28" r="24" {...b} /><path d="M27 4A24 24 0 0 0 4 22L18 26Q20 19 27 18Z" {...w} /><circle cx="27" cy="28" r="10" fill="#f3f2f1" stroke="#1668ad" /></V>,
  <V><rect x="2" y="4" width="50" height="48" {...w} /><path d="M2 4H26V30H2ZM2 30H26V52H2Z" {...b} /><path d="M26 4V52M26 20H52M40 20V52M26 36H40" /></V>,
  <V><circle cx="25" cy="22" r="17" {...w} /><path d="M13 14Q20 6 28 8L26 18L18 22ZM28 22L40 16Q42 30 30 36Z" fill="#6cc07a" stroke="#2e8b45" /><path d="M40 4Q54 24 38 38Q24 48 8 36M27 43V52M14 52H40" /></V>,
  <V><path d="M2 6Q12 10 22 4V22L14 28H2Z" {...b} /><path d="M22 4L32 12L52 6V26H34L22 22Z" {...g} /><path d="M2 28H14L22 22L34 26L30 48Q8 46 2 28Z" {...g} /><path d="M34 26H52Q50 44 30 48Z" {...b} /></V>,
  <span className="-m-[3px] flex h-[24px] w-[24px] items-center justify-center border border-[#7d7b79] bg-[#cbc9c7]"><V><g fill="#fff" stroke="#1b7ac0"><path d="M2 6Q12 10 22 4V22L14 28H2Z" /><path d="M22 4L32 12L52 6V26H34L28 18L22 22Z" /><path d="M2 28H14L22 22L28 34L30 48Q8 46 2 28Z" /><path d="M34 26H52Q50 44 30 48L28 34Z" /></g></V></span>,
  <V><path d="M32 0L54 54L30 38L8 54Z" fill="#28a0dc" stroke="none" /><path d="M32 0L30 38L8 54Z" fill="#156a9c" stroke="none" /></V>,
  <V><path d="M2 40A25 25 0 0 1 52 40H40A13 13 0 0 0 14 40Z" {...w} /><path d="M18 17A25 25 0 0 1 52 40H40A13 13 0 0 0 22 28Z" {...b} /><path d="M18 24L29 38" /></V>,
  <V><rect x="2" y="9" width="50" height="36" {...w} /><text x="27" y="33" textAnchor="middle" fontSize="23" fontWeight="600" fontFamily="Noto Sans, sans-serif" fill={BLUE} stroke="none">123</text><path d="M12 38H42" strokeWidth="2" /></V>,
  <V><rect x="2" y="4" width="50" height="46" {...w} /><path d="M10 12V42" stroke="#1668ad" /><path d="M16 18H42M16 27H34M16 36H38" stroke={BLUE} strokeWidth="5" /></V>,
  <V><rect x="2" y="6" width="50" height="40" {...w} /><path d="M8 26L16 14L24 26Z" fill="#6cc07a" stroke="#2e8b45" /><path d="M30 14H46L38 27Z" fill="#e06060" stroke="#c02828" /><path d="M8 36H46" strokeWidth="2" stroke="#8a8886" /></V>,
  <V><path d="M26 46H2V4H50V22" {...w} /><path d="M4 12H50" stroke="#8a8886" strokeWidth="8" /><rect x="9" y="22" width="9" height="7" {...g} /><rect x="9" y="35" width="9" height="6" {...g} /><path d="M26 26H54L44 38V52H37V38Z" {...w} /></V>,
  <V><rect x="2" y="4" width="50" height="48" {...w} /><path d="M3 9H51" stroke="#a19f9d" strokeWidth="7" /><path d="M2 14H52M2 27H52M2 40H52M19 14V52M36 14V52" strokeWidth="2.6" /></V>,
  <V><rect x="2" y="4" width="50" height="48" {...w} /><path d="M19 27H52V52H36V40H19ZM36 14H52V27H36Z" fill={LIGHT} stroke="none" /><path d="M3 9H51" stroke="#a19f9d" strokeWidth="7" /><path d="M2 14H52M2 27H52M2 40H52M19 14V52M36 14V52" stroke="#2a6ea6" strokeWidth="2.6" /><rect x="2" y="4" width="50" height="48" /></V>,
  <span className="pl-[3px] text-[15px] font-bold leading-[18px] text-[#1b87cf]">R</span>,
  <span className="text-[15px] font-bold leading-[18px] tracking-[-0.2px] text-[#1b87cf]">Py</span>,
  <V><Axes /><path d="M2 11H36M2 27H24M2 40H14" /><circle cx="42" cy="11" r="6" {...b} strokeWidth="5" /><circle cx="30" cy="27" r="4" fill="#8a8886" stroke="#8a8886" /><circle cx="18" cy="40" r="3" fill="#8a8886" stroke="#8a8886" /></V>,
  <V><path d="M16 27H26M26 9V46M26 9H34M26 27H34M26 46H34" /><rect x="2" y="20" width="15" height="13" {...b} /><rect x="34" y="3" width="18" height="12" {...b} /><rect x="34" y="21" width="18" height="12" {...b} /><rect x="34" y="39" width="18" height="12" {...b} /></V>,
  <V><path d="M2 6H52V37H28L15 50V37H2Z" fill="#fafafa" stroke="#1668ad" /></V>,
  <V><path d="M12 16V2H34L46 14V50H12V30M34 2V15H46" {...w} /><circle cx="9" cy="22" r="5" {...b} /><path d="M22 24H38M18 34H38" stroke={BLUE} /></V>,
  <V><path d="M14 4H40V18Q40 32 27 34Q14 32 14 18Z" {...w} /><path d="M17 10H37V18Q37 28 27 29Q17 28 17 18Z" fill={LIGHT} stroke={BLUE} strokeWidth="2" /><path d="M14 8H4Q4 24 16 26M40 8H50Q50 24 38 26M27 34V44M18 50H36V44H18Z" /></V>,
  <V><path d="M6 2H32L46 16V52H6ZM32 2V16H46" {...w} /><path d="M14 46V34M23 46V38M31 46V36M39 46V27" strokeWidth="5" /></V>,
  <V><rect x="6" y="6" width="46" height="44" {...b} /><path d="M8 44L24 30L32 34L44 8H50V20L38 44L20 50H8Z" fill="#fafafa" stroke="#1668ad" /><path d="M0 8Q9 -4 18 8Q18 18 9 30Q0 18 0 8Z" fill="#e0740e" stroke="none" /><circle cx="9" cy="10" r="3.5" fill="#fff" stroke="none" /><circle cx="46" cy="34" r="6" fill="#e0740e" stroke="none" /><circle cx="38" cy="48" r="5" fill="#e0740e" stroke="none" /><circle cx="50" cy="48" r="7" fill="#e0740e" stroke="none" /></V>,
  <V><g stroke="#8f3fa3" strokeWidth="3"><path d="M17 6H37L53 28L37 50H17L1 28Z" fill="#fafafa" /><path d="M27 8L38 18L27 28L16 18ZM27 28L38 38L27 48L16 38ZM16 18L6 28L16 38M38 18L48 28L38 38" /></g></V>,
  <V><g stroke="#1b72d8" strokeWidth="3.2"><path d="M2 6H18L34 28L18 50H2L18 28Z" fill="#fafafa" /><path d="M18 6H36L52 28L36 50H18M26 6L43 28L26 50M6 46L30 14" /></g></V>,
  <span className="-mt-[10px] text-[18px] leading-[18px] tracking-[1.6px] text-[#3b3a39]">...</span>,
];

const Chev = ({ up, small }: { up?: boolean; small?: boolean }) => (
  <svg viewBox="0 0 13 8" className={small ? "h-[6px] w-[9px] shrink-0" : "h-[8px] w-[13px] shrink-0"} fill="none" stroke="#605e5c" strokeWidth="1.1">
    <path d={up ? "M.8 7L6.5 1.2L12.2 7" : "M.8 1L6.5 6.8L12.2 1"} />
  </svg>
);

const Fold = ({ label, up }: { label: string; up?: boolean }) => (
  <div className="flex h-[37.6px] items-center gap-[7px] border-b border-[#dfdddb] pl-[7px] pt-[2px] text-[12px] tracking-[-0.13px] text-[#3b3a39]">
    <Chev up={up} />
    {label}
  </div>
);

const Visuals = () => (
  <section className="relative h-full w-[190px] overflow-hidden border-x border-[#e1dfdd] bg-[#f3f2f1]">
    <div className="flex h-[50px] items-center justify-between pl-[12px] pr-[12px] pt-[3px]">
      <h3 className="text-[14.8px] font-semibold tracking-[0.02px] text-[#3b3a39]">Visualisations</h3>
      <svg viewBox="0 0 8 13" className="-mt-[6px] h-[13px] w-[8px]" fill="none" stroke="#4a4846" strokeWidth="1.1"><path d="M.8 .8L7 6.5L.8 12.2" /></svg>
    </div>
    <div className="grid h-[183px] grid-cols-[repeat(6,29.3px)] grid-rows-[repeat(7,25.1px)] pl-[5px]">
      {GALLERY.map((x, i) => (
        <div key={i} className="flex items-center">{x}</div>
      ))}
    </div>
    <div className="flex h-[31px] items-center gap-[11px] border-b border-t border-b-[#dfdddb] border-t-[#e4e2e0] pb-[2px] pl-[6px]">
      <svg viewBox="0 0 16 16" className="h-[16px] w-[16px]" fill="none" stroke="#5fb8cc" strokeWidth="1.9"><circle cx="6.6" cy="6.6" r="5.3" /><path d="M10.5 10.5L15.2 15.2" /></svg>
      <svg viewBox="0 0 20 15" className="h-[15px] w-[20px]" fill="#f7faf9" stroke="#c9ebe2"><rect x=".5" y=".5" width="19" height="14" /><text x="10" y="8.6" textAnchor="middle" fontSize="8.6" fontWeight="600" fontFamily="Noto Sans, sans-serif" fill="#979593" stroke="none">123</text><path d="M4 11.5H16" stroke="#b3b0ad" /></svg>
    </div>
    <div className="flex h-[40px] items-start pl-[22px] pt-[9px]">
      <svg viewBox="0 0 66 66" className="mr-[10px] h-[22px] w-[22px]" fill="none" stroke="#3b3a39" strokeWidth="3.4">
        <path d="M6 3H56" strokeWidth="4" /><path d="M3 12H64V32H3ZM3 40H64V60H3Z" strokeDasharray="6 3" />
      </svg>
      <span className="relative flex w-[42px] justify-center">
        <svg viewBox="0 0 66 66" className="h-[22px] w-[22px]" fill="none" stroke="#3b3a39" strokeWidth="3.6">
          <rect x="5" y="4" width="48" height="12" rx="3" fill="#fafafa" /><path d="M53 9H62V24H33V36" /><rect x="27" y="36" width="12" height="27" fill="#fafafa" />
        </svg>
        <i className="absolute -bottom-[7px] left-0 h-[4px] w-[42px] rounded-[2px] bg-[#f2c811]" />
      </span>
      <svg viewBox="0 0 66 66" className="ml-[10px] h-[22px] w-[22px]" fill="none" stroke="#3b3a39" strokeWidth="3.6">
        <circle cx="28" cy="28" r="24" /><path d="M46 46L64 64M5 32L18 22L28 28L38 14L50 20M16 46V34M25 50V36M34 50V34M42 44V26" />
      </svg>
    </div>
    <div className="mb-[8px] ml-[4px] mt-[1px] flex h-[32px] w-[174px] items-center rounded-[2px] border border-[#c8c6c4] bg-white pl-[12px] text-[12.6px] tracking-[-0.1px] text-[#3b3a39]">
      <svg viewBox="0 0 16 16" className="mr-[8px] h-[16px] w-[16px]" fill="none" stroke="#3b3a39"><circle cx="10" cy="6" r="5" /><path d="M6.4 9.6L.8 15.2" /></svg>
      <span className="pt-[2px]">Rechercher</span>
    </div>
    <div className="relative w-[183px] border-t border-[#dfdddb]">
      <Fold label="Général" />
      <Fold label="Couleurs des données" />
      <Fold label="Forme" up />
      <div className="h-[225px] border-b border-[#dfdddb] pl-[18px] pr-[20px] pt-[11px] text-[12px] leading-[16.5px] tracking-[-0.15px] text-[#3b3a39]">
        <div className="flex items-center justify-between">
          <span>e</span>
          <span className="flex h-[26px] w-[132px] items-center justify-between whitespace-nowrap rounded-[1px] border border-[#a19f9d] bg-white pl-[4px] pr-[8px] text-[11.8px]">Carte personnalisée<Chev small /></span>
        </div>
        <div className="text-right text-[12.2px] tracking-[-0.13px] text-[#3e68ad] underline underline-offset-2">Afficher la clé de type de carte</div>
        <div className="mt-[12px] flex items-center justify-end gap-[6px] text-[12.1px]">
          a-dep2021 (1).json
          <svg viewBox="0 0 10 10" className="h-[10px] w-[10px]" stroke="#3b3a39" strokeWidth="1.1"><path d="M.6 .6L9.4 9.4M9.4 .6L.6 9.4" /></svg>
        </div>
        <div className="mt-[22px]">Projection</div>
        <div className="mt-[4px] flex h-[25px] items-center justify-between rounded-[1px] border border-[#a19f9d] bg-white pl-[5px] pr-[8px]">Mercator<Chev small /></div>
        <div className="mt-[25px] pl-[3px] text-[#3e68ad]">Rétablir les valeurs par...</div>
      </div>
      <Fold label="Couleur par défaut" />
      <Fold label="Zoom" />
      <div className="flex h-[37.6px] items-center pl-[27px] pt-[1px] text-[12px] tracking-[-0.1px] text-[#3b3a39]">
        <span className="w-[75px]">Titre</span>
        <span>D</span>
        <i className="ml-[15px] h-[13px] w-[13px] rounded-full border-[3px] border-[#605e5c]" />
      </div>
      <i className="absolute right-[0px] top-0 h-[337px] w-[6px] rounded-[3px] bg-[#cfcdcb]" />
    </div>
  </section>
);

export default function App() {
  return (
    <div className="flex h-[907px] w-[1385px] flex-col overflow-hidden bg-[#f3f2f1] font-['Noto_Sans','Open_Sans',sans-serif]">
      <Ribbon />
      <div className="flex min-h-0 flex-1">
        <nav className="flex w-[43px] shrink-0 flex-col border-r border-[#e6e4e2]">
          <div className="flex h-[42px] items-center border-l-[3px] border-[#f2c811] pl-[11px]">
            <svg viewBox="0 0 16 16" className="h-[16px] w-[16px]" fill="none" stroke="#3b3a39"><path d="M1 1V15H16M3.5 13V4.5H5.5V13ZM8 13V7.5H10V13ZM12 13V2.5H14V13Z" /></svg>
          </div>
          <div className="flex h-[40px] items-center pl-[14px]">
            <svg viewBox="0 0 17 16" className="h-[16px] w-[17px]" fill="none" stroke="#605e5c"><path d="M.5 .5H16.5V15.5H.5ZM.5 3H16.5M.5 7H16.5M.5 11H16.5M5.5 3V15.5M11 3V15.5" /></svg>
          </div>
          <div className="flex h-[44px] items-center pl-[12px]">
            <svg viewBox="0 0 20 20" className="h-[20px] w-[20px]" fill="none" stroke="#605e5c" strokeWidth="1.1"><path d="M1 6.5H9V14H1ZM1 9H9M11 .8H19V8.5H11ZM11 3.5H19M11 11.5H19V19H11ZM11 14H19M5 6.5V4H11M5 14V16.5H11" /></svg>
          </div>
        </nav>
        <Report />
        <div className="flex w-[34px] shrink-0 flex-col items-center border-l border-[#e1dfdd] bg-white">
          <svg viewBox="0 0 8 13" className="mr-[2px] mt-[17px] h-[13px] w-[8px]" fill="none" stroke="#3b3a39" strokeWidth="1.1"><path d="M7.2 .8L1 6.5L7.2 12.2" /></svg>
          <svg viewBox="0 0 12 13" className="ml-[4px] mt-[36px] h-[13px] w-[12px]" fill="none" stroke="#4a4846" strokeWidth="1"><path d="M11.3 .6V12.4H10.2L5.2 8.2H.6V6.2H4L10.2 .6Z" /></svg>
          <span className="mr-[2px] mt-[13px] text-[15px] font-semibold leading-[18px] text-[#252423] [writing-mode:vertical-rl]">Filtres</span>
        </div>
        <Visuals />
      </div>
    </div>
  );
}
